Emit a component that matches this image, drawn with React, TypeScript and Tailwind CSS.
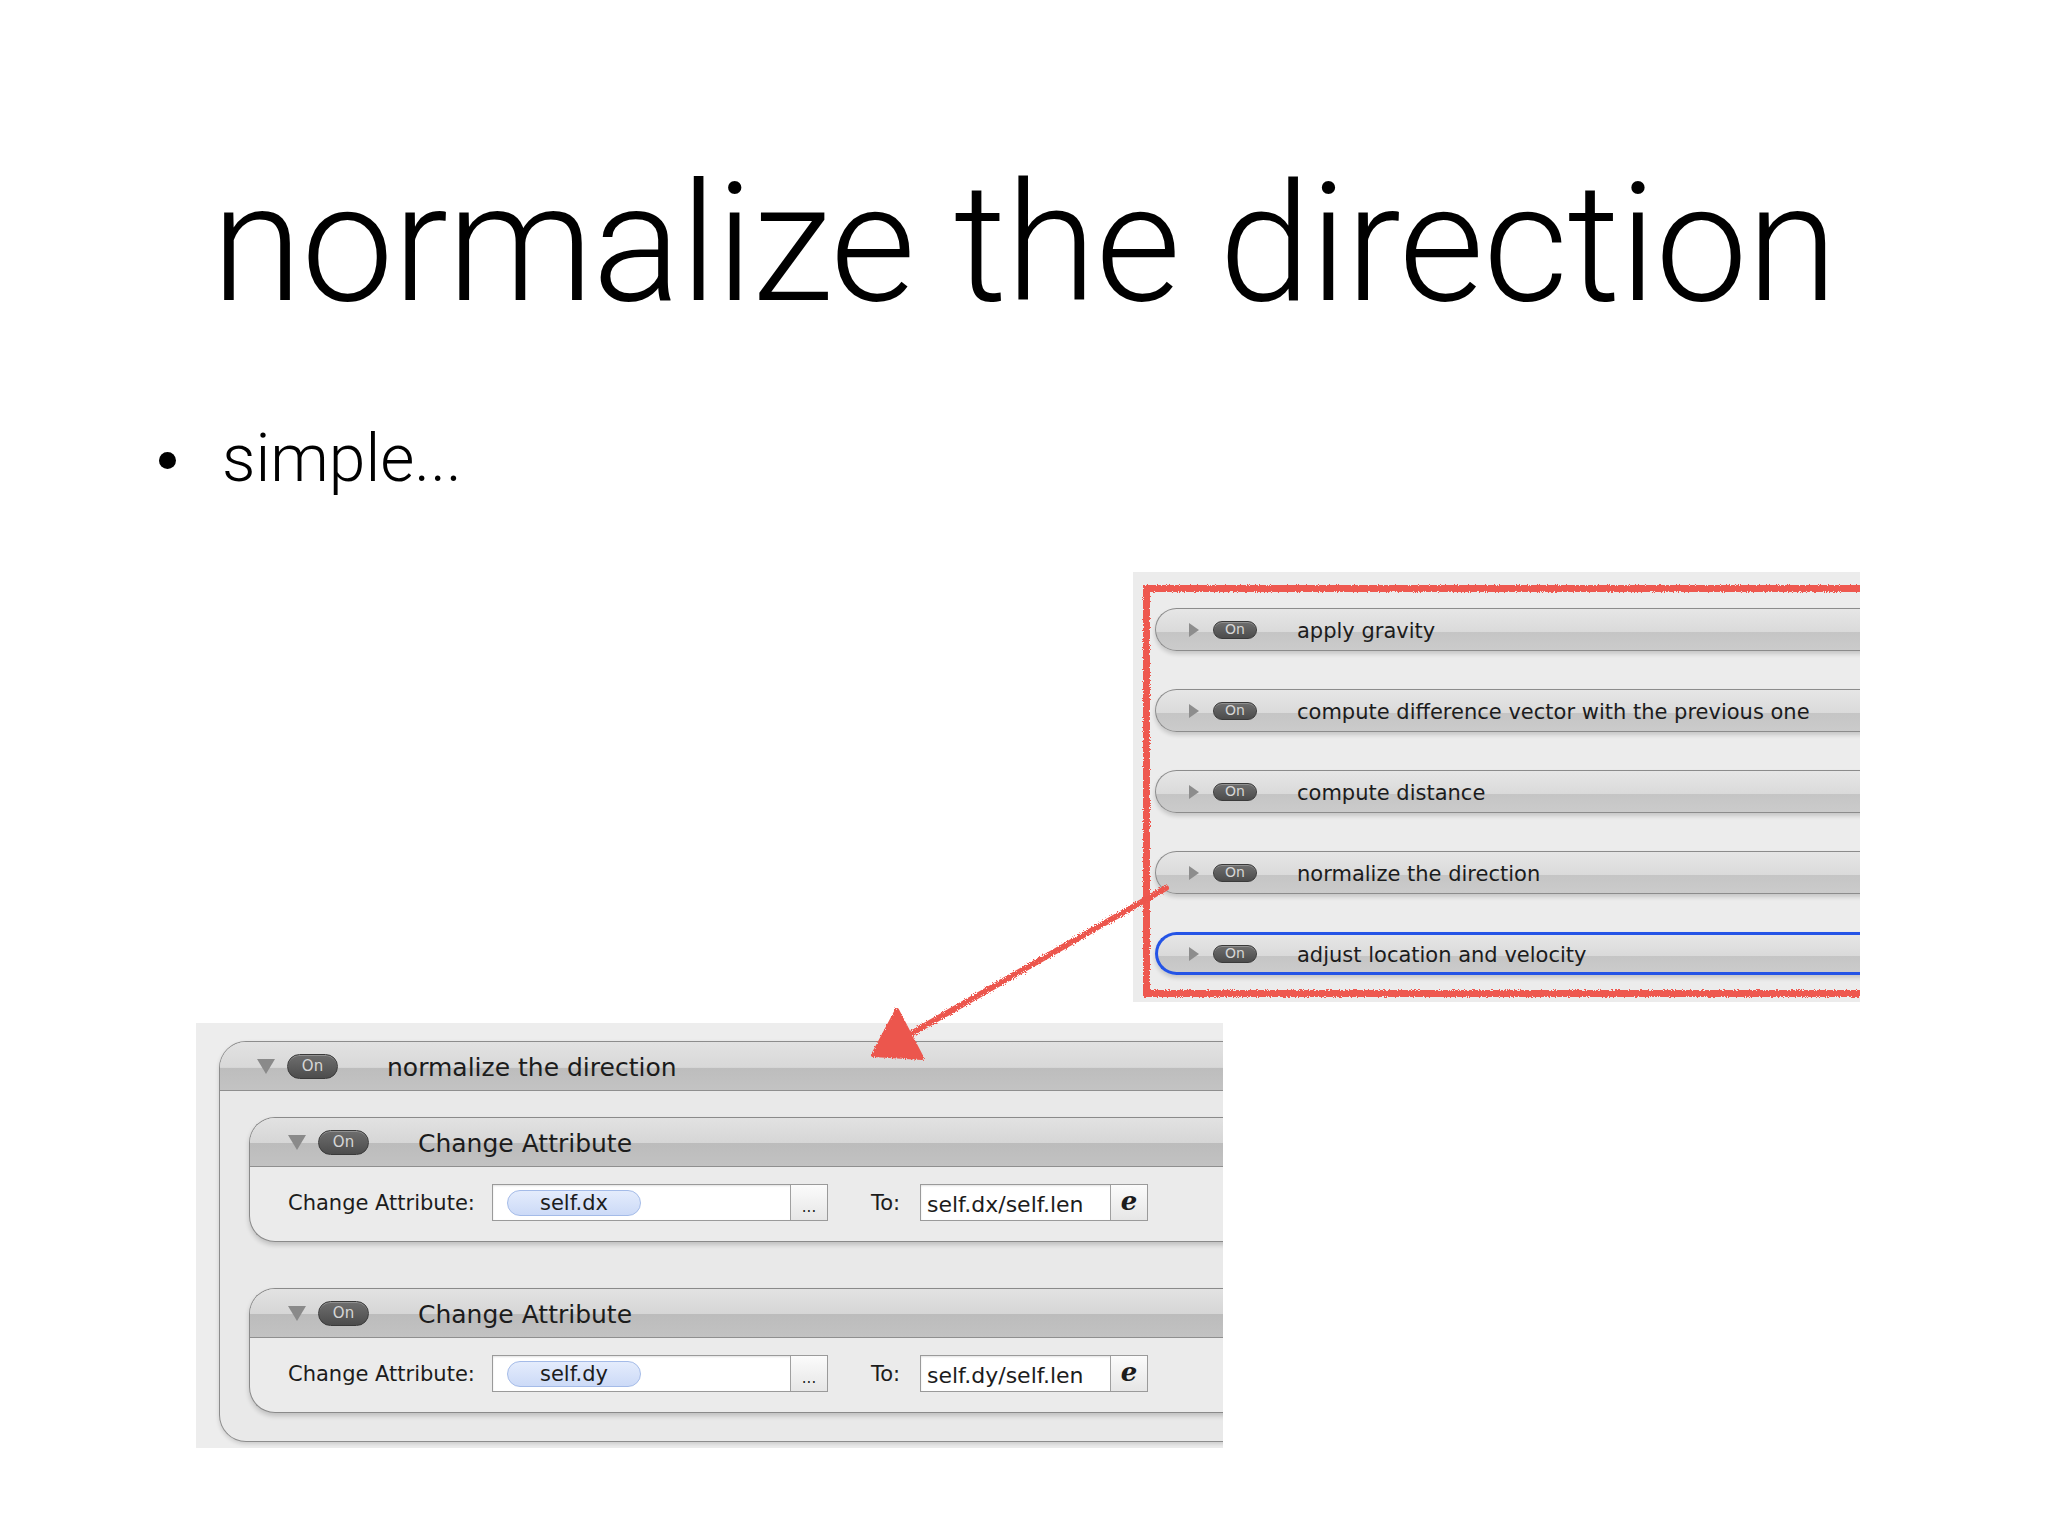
import React from "react";

const ui = "font-['DejaVu_Sans',sans-serif]";

function OnPill({ big }: { big?: boolean }) {
  return (
    <span
      className={`flex shrink-0 items-center justify-center rounded-full border border-[#3a3a3a] bg-[linear-gradient(to_bottom,#6e6e6e,#4c4c4c)] text-[#d6d6d6] shadow-[inset_0_1px_0_rgba(255,255,255,0.25)] ${ui} ${
        big ? "h-[25px] w-[51px] text-[15px]" : "h-[18px] w-[44px] text-[14px]"
      }`}
    >
      On
    </span>
  );
}

function TriRight() {
  return (
    <svg width="10" height="14" viewBox="0 0 10 14" className="shrink-0">
      <polygon points="0,0 10,7 0,14" fill="#8d8d8d" />
    </svg>
  );
}

function TriDown() {
  return (
    <svg width="18" height="15" viewBox="0 0 18 15" className="shrink-0">
      <polygon points="0,0 18,0 9,15" fill="#8a8a8a" />
    </svg>
  );
}

function ListRow({ label, active }: { label: string; active?: boolean }) {
  return (
    <div
      className={`flex h-[43px] w-[760px] shrink-0 items-center rounded-l-full border-r-0 bg-[linear-gradient(to_bottom,#e6e6e6_0%,#dadada_56%,#c5c5c5_57%,#cbcbcb_100%)] shadow-[0_3px_4px_rgba(0,0,0,0.16)] ${
        active ? "border-[3px] border-r-0 border-[#2454e6] pl-[31px]" : "border border-r-0 border-[#8c8c8c] pl-[33px]"
      }`}
    >
      <TriRight />
      <span className="ml-[14px]">
        <OnPill />
      </span>
      <span className={`ml-[40px] pt-[4px] text-[21px] text-[#1c1c1c] ${ui}`}>{label}</span>
    </div>
  );
}

function AttrPanel({ token, expr }: { token: string; expr: string }) {
  return (
    <div className="ml-[29px] w-[1000px] rounded-l-[26px] border border-r-0 border-[#8a8a8a] bg-[#ebebeb] shadow-[0_3px_5px_rgba(0,0,0,0.18)]">
      <div className="flex h-[49px] items-center rounded-tl-[25px] border-b border-[#8f8f8f] bg-[linear-gradient(to_bottom,#e2e2e2_0%,#d6d6d6_52%,#bcbcbc_53%,#c2c2c2_100%)] pl-[38px]">
        <TriDown />
        <span className="ml-[12px]">
          <OnPill big />
        </span>
        <span className={`ml-[49px] pt-[3px] text-[25px] text-[#1c1c1c] ${ui}`}>Change Attribute</span>
      </div>
      <div className={`flex h-[74px] items-start pl-[38px] pt-[17px] text-[21px] text-[#1c1c1c] ${ui}`}>
        <span className="flex h-[37px] w-[189px] items-center pt-[3px]">Change Attribute:</span>
        <div className="ml-[15px] flex h-[37px] w-[336px] border border-[#9a9a9a] bg-white shadow-[inset_0_1px_2px_rgba(0,0,0,0.12)]">
          <div className="flex flex-1 items-center pl-[14px]">
            <span className="flex h-[26px] w-[134px] items-center justify-center rounded-full border border-[#a4bbe8] bg-[linear-gradient(to_bottom,#e4ecfc,#ccdaf7)] pt-[2px]">
              {token}
            </span>
          </div>
          <span className="flex w-[37px] items-end justify-center border-l border-[#a0a0a0] bg-[linear-gradient(to_bottom,#fbfbfb,#e6e6e6)] pb-[5px] text-[15px] leading-none">
            ...
          </span>
        </div>
        <span className="ml-[43px] flex h-[37px] w-[49px] items-center pt-[2px]">To:</span>
        <div className="flex h-[37px] w-[228px] border border-[#9a9a9a] bg-white shadow-[inset_0_1px_2px_rgba(0,0,0,0.12)]">
          <span className="flex flex-1 items-center pl-[6px] pt-[3px] text-[22px]">{expr}</span>
          <span className="flex w-[37px] items-center justify-center border-l border-[#a0a0a0] bg-[linear-gradient(to_bottom,#fbfbfb,#e6e6e6)] pb-[3px] font-['DejaVu_Serif','Liberation_Serif',serif] text-[26px] font-bold italic leading-none">
            e
          </span>
        </div>
      </div>
    </div>
  );
}

export default function App() {
  return (
    <div className="relative h-[1536px] w-[2048px] overflow-hidden bg-white">
      <div className="flex flex-col">
        <h1 className="mt-[161px] text-center font-['Roboto','Liberation_Sans',sans-serif] text-[165px] font-light leading-none tracking-[-1px] text-black">
          normalize the direction
        </h1>

        <div className="mt-[100px] flex h-[66px] items-start pl-[159px] font-['Roboto','Liberation_Sans',sans-serif] text-[66px] font-light leading-none text-black">
          <span className="mt-[26px] h-[17px] w-[17px] shrink-0 rounded-full bg-black" />
          <span className="ml-[46px]">simple...</span>
        </div>

        <div className="relative ml-[1133px] mt-[80px] w-[727px] overflow-hidden bg-[#ececec] pb-[5px] pl-[10px] pt-[13px]">
          <div className="flex flex-col gap-[38px] pb-[22px] pl-[12px] pt-[23px]">
            <ListRow label="apply gravity" />
            <ListRow label="compute difference vector with the previous one" />
            <ListRow label="compute distance" />
            <ListRow label="normalize the direction" />
            <ListRow label="adjust location and velocity" active />
          </div>
          <div className="pointer-events-none absolute bottom-[5px] left-[10px] right-[-20px] top-[13px] border-[7px] border-[#ee5850] [filter:url(#rough)]" />
        </div>

        <div className="ml-[196px] mt-[21px] w-[1027px] overflow-hidden bg-[#ededed] pb-[6px] pl-[23px] pt-[18px]">
          <div className="w-[1100px] rounded-l-[27px] border border-r-0 border-[#8d8d8d] bg-[#e9e9e9] shadow-[0_2px_4px_rgba(0,0,0,0.15)]">
            <div className="flex h-[49px] items-center rounded-tl-[26px] border-b border-[#8f8f8f] bg-[linear-gradient(to_bottom,#e2e2e2_0%,#d8d8d8_53%,#bdbdbd_54%,#c3c3c3_100%)] pl-[37px]">
              <TriDown />
              <span className="ml-[12px]">
                <OnPill big />
              </span>
              <span className={`ml-[49px] pt-[3px] text-[25px] text-[#1c1c1c] ${ui}`}>normalize the direction</span>
            </div>
            <div className="flex flex-col gap-[46px] pb-[28px] pt-[26px]">
              <AttrPanel token="self.dx" expr="self.dx/self.len" />
              <AttrPanel token="self.dy" expr="self.dy/self.len" />
            </div>
          </div>
        </div>
      </div>

      <svg className="pointer-events-none absolute left-0 top-0" width="2048" height="1536" viewBox="0 0 2048 1536">
        <defs>
          <filter id="rough" x="-10%" y="-10%" width="120%" height="120%">
            <feTurbulence type="fractalNoise" baseFrequency="0.9" numOctaves="2" seed="3" />
            <feDisplacementMap in="SourceGraphic" scale="4" />
          </filter>
        </defs>
        <g filter="url(#rough)" fill="#ec574e" stroke="#ec574e">
          <line x1="1166" y1="888" x2="900" y2="1040" strokeWidth="6" strokeLinecap="round" />
          <polygon points="897,1010 873,1055 922,1058" strokeWidth="4" strokeLinejoin="round" />
        </g>
      </svg>
    </div>
  );
}
